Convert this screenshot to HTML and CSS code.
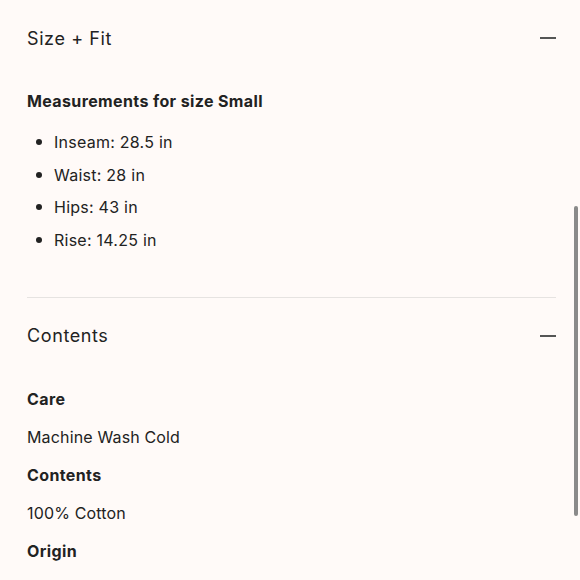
FILE: index.html
```html
<!DOCTYPE html>
<html>
<head>
<meta charset="utf-8">
<link rel="stylesheet" href="styles.css">
</head>
<body>
<div class="page">
  <section class="acc">
    <div class="acc-head">
      <span class="acc-title">Size + Fit</span>
      <span class="minus"></span>
    </div>
    <div class="acc-body fit">
      <h4 class="label">Measurements for size Small</h4>
      <ul class="measures">
        <li>Inseam: 28.5 in</li>
        <li>Waist: 28 in</li>
        <li>Hips: 43 in</li>
        <li>Rise: 14.25 in</li>
      </ul>
    </div>
  </section>
  <section class="acc">
    <div class="acc-head">
      <span class="acc-title">Contents</span>
      <span class="minus"></span>
    </div>
    <div class="acc-body">
      <h4 class="label">Care</h4>
      <p class="value">Machine Wash Cold</p>
      <h4 class="label">Contents</h4>
      <p class="value">100% Cotton</p>
      <h4 class="label">Origin</h4>
    </div>
  </section>
</div>
<div class="scrollbar"></div>
</body>
</html>
```
FILE: styles.css
```css
html, body {
  margin: 0;
  padding: 0;
  background: #fffaf8;
  height: 580px;
  overflow: hidden;
}
body {
  font-family: "Inter", "Liberation Sans", sans-serif;
  color: #222;
}
.page {
  padding: 0 24px 0 27px;
}
.acc + .acc {
  border-top: 1px solid #e6e3e1;
}
.acc-head {
  height: 76px;
  display: flex;
  align-items: center;
  justify-content: space-between;
}
.acc-title {
  font-size: 18px;
  letter-spacing: 0.6px;
  font-weight: 400;
}
.minus {
  width: 16px;
  height: 2px;
  background: #555;
}
.acc-body.fit {
  padding-bottom: 45px;
}
.label {
  margin: 13px 0 0;
  font-size: 16px;
  line-height: 24px;
  font-weight: 700;
  letter-spacing: 0.38px;
}
.value {
  margin: 14px 0 0;
  font-size: 16px;
  line-height: 24px;
  letter-spacing: 0.15px;
}
.value + .label {
  margin-top: 14px;
}
.measures {
  list-style: none;
  margin: 17px 0 0;
  padding: 0 0 0 27px;
  font-size: 16px;
  line-height: 24px;
  letter-spacing: 0.25px;
}
.measures li {
  position: relative;
  margin-bottom: 8.5px;
}
.measures li::before {
  content: "";
  position: absolute;
  left: -18px;
  top: 9px;
  width: 6px;
  height: 6px;
  border-radius: 50%;
  background: #222;
}
.measures li:last-child {
  margin-bottom: 0;
}
.scrollbar {
  position: absolute;
  left: 574px;
  top: 206px;
  width: 4px;
  height: 310px;
  border-radius: 2px;
  background: #8a8a8a;
}
```
